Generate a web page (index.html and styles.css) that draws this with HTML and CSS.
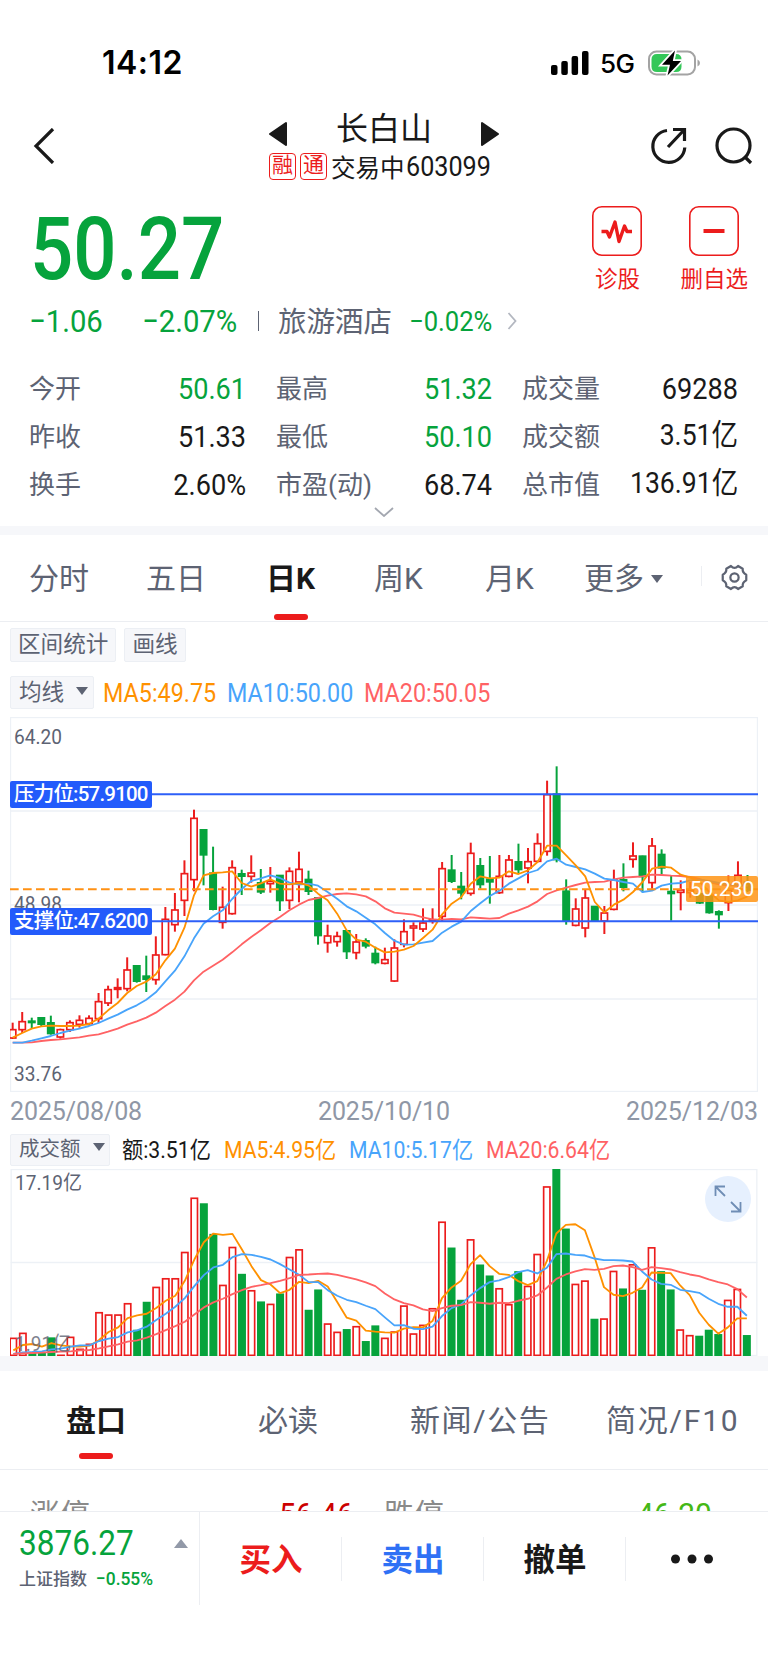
FILE: index.html
```
<!DOCTYPE html>
<html lang="zh-CN">

<head>
    <meta charset="UTF-8">
    <meta name="viewport" content="width=device-width, initial-scale=1.0">
    <title>长白山 603099</title>
    <link rel="stylesheet" href="styles.css">
</head>

<body>
    <div class="statusBar">
        <span class="clock">14:12</span>
        <div class="statusIcons">
            <svg class="signal" viewBox="0 0 38 24">
                <rect x="0" y="14" width="6.5" height="10" rx="2" />
                <rect x="10.3" y="10" width="6.5" height="14" rx="2" />
                <rect x="20.6" y="5" width="6.5" height="19" rx="2" />
                <rect x="31" y="0" width="6.5" height="24" rx="2" />
            </svg>
            <span class="network">5G</span>
            <svg class="battery" viewBox="0 0 52 26">
                <rect x="1" y="1.5" width="46" height="23" rx="7.5" fill="none" stroke="#a3a3a3" stroke-width="2" />
                <path d="M49.500 9.500 Q52 10.500 52 13 Q52 15.500 49.500 16.500 Z" fill="#a3a3a3" />
                <path d="M9 4 H28 Q33.500 4 33.500 9.500 V16.500 Q33.500 22 28 22 H9 Q3.500 22 3.500 16.500 V9.500 Q3.500 4 9 4 Z" fill="#34c759" />
                <path d="M27 .5 L14 14.800 H22 L19.500 25.500 L33 11 H24.800 Z" fill="#000" stroke="#fff" stroke-width="3.600" paint-order="stroke" />
            </svg>
        </div>
    </div>

    <header class="header">
        <svg class="back" viewBox="0 0 22 36"><path d="M20 1 L3 18 L20 35" fill="none" stroke="#191919" stroke-width="3.200" /></svg>
        <div class="stockTitle">
            <div class="stockName">
                <svg class="arrow" viewBox="0 0 18 26"><path d="M17 2 V24 L1 13 Z" stroke-width="2" stroke-linejoin="round" /></svg>
                <h1>长白山</h1>
                <svg class="arrow" viewBox="0 0 18 26"><path d="M1 2 V24 L17 13 Z" stroke-width="2" stroke-linejoin="round" /></svg>
            </div>
            <div class="stockInfo">
                <span class="mark">融</span>
                <span class="mark">通</span>
                <span class="state">交易中</span>
                <span class="code num">603099</span>
            </div>
        </div>
        <div class="headerIcons">
            <svg class="share" viewBox="0 0 38 38" fill="none" stroke="#191919" stroke-width="3.200">
                <path d="M17 3.500 A16 16 0 1 0 34.800 20.500" />
                <path d="M18 20 L34 3 M23 2.500 H34.500 V14" />
            </svg>
            <svg class="search" viewBox="0 0 38 38" fill="none" stroke="#191919" stroke-width="3.200">
                <circle cx="18.500" cy="18.500" r="16.500" />
                <path d="M30 30 L36 36" />
            </svg>
        </div>
    </header>

    <section class="quote">
        <div class="priceRow">
            <span class="price green">50.27</span>
            <div class="actions">
                <div class="action">
                    <svg viewBox="0 0 50 50" fill="none" stroke="#ec1c1c">
                        <rect x=".8" y=".8" width="48.400" height="48.400" rx="9" stroke-width="1.600" />
                        <path d="M9.500 25.500 H15 L17.500 31 L23 16 L27 35.500 L32.500 20 L35 25.500 H40" stroke-width="3.400" stroke-linejoin="round" />
                    </svg>
                    <span>诊股</span>
                </div>
                <div class="action">
                    <svg viewBox="0 0 50 50" fill="none" stroke="#ec1c1c">
                        <rect x=".8" y=".8" width="48.400" height="48.400" rx="9" stroke-width="1.600" />
                        <path d="M14.500 25 H35.500" stroke-width="4" />
                    </svg>
                    <span>删自选</span>
                </div>
            </div>
        </div>
        <div class="changeRow">
            <span class="diff num green">−1.06</span>
            <span class="percent num green">−2.07%</span>
            <i class="bar"></i>
            <span class="sector">旅游酒店</span>
            <span class="sectorPercent num green">−0.02%</span>
            <svg class="more" viewBox="0 0 10 18"><path d="M1.500 1 L8.500 9 L1.500 17" fill="none" stroke="#b3b7c0" stroke-width="1.800" /></svg>
        </div>
        <div class="stats">
            <div class="stat"><span>今开</span><b class="green">50.61</b></div>
            <div class="stat"><span>最高</span><b class="green">51.32</b></div>
            <div class="stat"><span>成交量</span><b>69288</b></div>
            <div class="stat"><span>昨收</span><b>51.33</b></div>
            <div class="stat"><span>最低</span><b class="green">50.10</b></div>
            <div class="stat"><span>成交额</span><b>3.51亿</b></div>
            <div class="stat"><span>换手</span><b>2.60%</b></div>
            <div class="stat"><span>市盈(动)</span><b>68.74</b></div>
            <div class="stat"><span>总市值</span><b>136.91亿</b></div>
        </div>
        <svg class="expand" viewBox="0 0 20 10"><path d="M1 1 L10 9 L19 1" fill="none" stroke="#a3a7b0" stroke-width="1.800" /></svg>
    </section>

    <nav class="periods">
        <span>分时</span>
        <span>五日</span>
        <span class="active">日K</span>
        <span>周K</span>
        <span>月K</span>
        <span>更多<i class="caret"></i></span>
        <i class="divider"></i>
        <svg class="gear" viewBox="0 0 28 28" fill="none" stroke="#5d6373" stroke-width="2.300" stroke-linejoin="round">
            <path d="M10.300 2 Q14 6 17.700 2 L22.500 4.900 Q22 9 26.200 11.200 V16.800 Q22 19 22.500 23.100 L17.700 26 Q14 22 10.300 26 L5.500 23.100 Q6 19 1.800 16.800 V11.200 Q6 9 5.500 4.900 Z" />
            <circle cx="14" cy="14" r="4.300" />
        </svg>
    </nav>

    <div class="tools">
        <span class="chip">区间统计</span>
        <span class="chip">画线</span>
    </div>

    <div class="legend">
        <span class="chip select">均线<i class="caret"></i></span>
        <span class="ma5 num">MA5:49.75</span>
        <span class="ma10 num">MA10:50.00</span>
        <span class="ma20 num">MA20:50.05</span>
    </div>

    <div class="chart klineChart">
        <span class="axis axisTop">64.20</span>
        <span class="axis axisMiddle">48.98</span>
        <span class="axis axisBottom">33.76</span>
        <svg class="kline" viewBox="30 20 2244 1125"></svg>
        <span class="level pressure">压力位:57.9100</span>
        <span class="level support">支撑位:47.6200</span>
        <span class="lastPrice">50.230</span>
    </div>

    <div class="dates">
        <span>2025/08/08</span>
        <span>2025/10/10</span>
        <span>2025/12/03</span>
    </div>

    <div class="legend volumeLegend">
        <span class="chip select">成交额<i class="caret"></i></span>
        <span class="amount num">额:3.51亿</span>
        <span class="ma5 num">MA5:4.95亿</span>
        <span class="ma10 num">MA10:5.17亿</span>
        <span class="ma20 num">MA20:6.64亿</span>
    </div>

    <div class="chart volumeChart">
        <svg class="volume" viewBox="30 238 2244 562"></svg>
        <span class="axis volumeTop">17.19亿</span>
        <span class="axis volumeBottom">1.91亿</span>
        <svg class="fullscreen" viewBox="0 0 46 46">
            <circle cx="23" cy="23" r="23" fill="#e6f0fe" />
            <path d="M10.500 20 V10.500 H20 M10.500 10.500 L20 20 M26 26 L35.500 35.500 M35.500 26 V35.500 H26" fill="none" stroke="#6f8db5" stroke-width="1.800" />
        </svg>
    </div>

    <nav class="infoTabs">
        <span class="active">盘口</span>
        <span>必读</span>
        <span class="news">新闻/公告</span>
        <span class="brief">简况/F10</span>
    </nav>

    <div class="limits">
        <span>涨停</span>
        <b class="up">56.46</b>
        <span>跌停</span>
        <b class="down">46.20</b>
    </div>

    <footer class="tradeBar">
        <div class="index">
            <div class="indexValue num green">3876.27</div>
            <div class="indexName">上证指数 <span class="indexPercent num green">−0.55%</span></div>
            <i class="indexUp"></i>
        </div>
        <div class="trade buy">买入</div>
        <div class="trade sell">卖出</div>
        <div class="trade">撤单</div>
        <div class="trade">
            <svg class="dots" viewBox="0 0 42 10"><circle cx="4.500" cy="5" r="4.500" /><circle cx="21" cy="5" r="4.500" /><circle cx="37.500" cy="5" r="4.500" /></svg>
        </div>
    </footer>

    <script src="charts.js"></script>
</body>

</html>
```
FILE: styles.css
```
body {
    margin: 0;
    width: 768px;
    height: 1670px;
    overflow: hidden;
    background-color: white;
    color: #191919;
    font-family: Roboto, "Noto Sans CJK SC", sans-serif;
}

svg {
    display: block;
    flex: none;
}

.green {
    color: #06a33c;
}

/* numeros estrechos */
.num {
    display: inline-block;
    box-sizing: border-box;
    transform: scaleX(0.915);
    transform-origin: left center;
    white-space: nowrap;
}

/* barra de estado */
.statusBar {
    box-sizing: border-box;
    height: 100px;
    padding: 25px 68px 0 102px;
    display: flex;
    justify-content: space-between;
    align-items: center;
    color: black;
    font-family: Inter, sans-serif;
}

.clock {
    font-size: 32px;
    font-weight: 600;
    letter-spacing: 0.5px;
}

.statusIcons {
    display: flex;
    align-items: center;
}

.signal {
    width: 38px;
    height: 24px;
}

.network {
    width: 36px;
    margin: 1px 12px 0 11px;
    font-size: 26px;
    font-weight: 500;
    letter-spacing: -0.5px;
}

.battery {
    width: 52px;
    height: 26px;
}

/* cabecera */
.header {
    height: 92px;
    padding: 0 15px 0 33px;
    display: flex;
    justify-content: space-between;
    align-items: center;
}

.back {
    width: 22px;
    height: 36px;
    margin: 0 62px 0 0;
}

.stockTitle {
    width: 230px;
    display: flex;
    flex-direction: column;
    align-self: flex-start;
    padding: 14px 0 0 1px;
}

.stockName {
    display: flex;
    justify-content: space-between;
    align-items: center;
    height: 40px;
}

h1 {
    margin: 0 0 11px 0;
    font-size: 32px;
    font-weight: 400;
    line-height: 38px;
}

.arrow {
    width: 18px;
    height: 26px;
    fill: #191919;
    stroke: #191919;
}

.stockInfo {
    display: flex;
    align-items: center;
    height: 25px;
    font-size: 24.5px;
    white-space: nowrap;
}

.mark {
    flex: none;
    box-sizing: border-box;
    width: 27px;
    height: 27px;
    margin-right: 4px;
    border: 1px solid #ec1c1c;
    border-radius: 4px;
    color: #ec1c1c;
    font-size: 21px;
    line-height: 23px;
    text-align: center;
}

.state {
    width: 79px;
    padding-bottom: 1px;
}

.code {
    font-size: 27.5px;
}

.headerIcons {
    display: flex;
    gap: 27px;
}

.share,
.search {
    width: 38px;
    height: 38px;
}

/* cotizacion */
.quote {
    position: relative;
    height: 334px;
    border-bottom: 9px solid #f6f7fa;
}

.priceRow {
    height: 106px;
    padding: 0 20px 0 30px;
    display: flex;
    justify-content: space-between;
}

.price {
    font-size: 87px;
    font-weight: 500;
    line-height: 115px;
    transform: scaleX(0.875);
    transform-origin: left center;
}

.actions {
    display: flex;
    gap: 38px;
    padding-top: 14px;
}

.action {
    display: flex;
    flex-direction: column;
    align-items: center;
    color: #ec1c1c;
    font-size: 22.5px;
    line-height: 46px;
}

.action svg {
    width: 50px;
    height: 50px;
}

.changeRow {
    display: flex;
    align-items: center;
    height: 46px;
    padding-left: 29px;
    font-size: 32px;
}

.diff {
    width: 113px;
}

.percent {
    width: 115px;
}

.bar {
    width: 1px;
    height: 20px;
    margin: 0 19px 0 1px;
    background-color: #5d6373;
}

.sector {
    width: 131px;
    padding-bottom: 3px;
    color: #5d6373;
    font-size: 28.5px;
}

.sectorPercent {
    width: 98px;
    font-size: 28px;
}

.more {
    width: 10px;
    height: 18px;
}

.stats {
    display: grid;
    grid-template-columns: 217px 216px 216px;
    grid-auto-rows: 48px;
    column-gap: 30px;
    padding: 21px 30px 0 29px;
}

.stat {
    display: flex;
    justify-content: space-between;
    align-items: center;
    color: #5d6373;
    font-size: 26px;
}

.stat span {
    padding-bottom: 5px;
}

.stat b {
    font-size: 29.5px;
    font-weight: 400;
    line-height: 36px;
    color: #191919;
    transform: scaleX(0.92);
    transform-origin: right center;
}

.stat:nth-child(6) b,
.stat:nth-child(9) b {
    padding-bottom: 4px;
    transform: scaleX(0.9);
}

.stat b.green {
    color: #06a33c;
}

.expand {
    position: absolute;
    left: 374px;
    top: 315px;
    width: 20px;
    height: 10px;
}

/* periodos */
.periods {
    box-sizing: border-box;
    height: 87px;
    padding: 0 0 4px 29px;
    display: grid;
    grid-template-columns: 117px 120px 108px 111px 99px 117px 20px 28px;
    align-items: center;
    border-bottom: 1px solid #eceef2;
    color: #5d6373;
    font-size: 30px;
}

.active {
    position: relative;
    justify-self: start;
    color: #191919;
    font-weight: 700;
}

.active::after {
    content: "";
    position: absolute;
    left: 50%;
    bottom: -22px;
    width: 34px;
    height: 6px;
    margin-left: -17px;
    border-radius: 3px;
    background-color: #ec1c1c;
}

.caret {
    display: inline-block;
    border-left: 6px solid transparent;
    border-right: 6px solid transparent;
    border-top: 8px solid #5d6373;
    margin-left: 7px;
    vertical-align: 6px;
}

.divider {
    width: 1px;
    height: 20px;
    background-color: #eceef2;
}

.gear {
    width: 27px;
    height: 27px;
    margin-top: 3px;
}

.tools {
    display: flex;
    gap: 8px;
    height: 48px;
    padding: 6px 10px 0 10px;
    box-sizing: border-box;
}

.chip {
    box-sizing: border-box;
    height: 34px;
    padding: 0 7px;
    border: 1px solid #eceff4;
    border-radius: 2px;
    background-color: #f6f7fa;
    color: #5d6373;
    font-size: 22.6px;
    line-height: 32px;
}

.legend {
    display: flex;
    align-items: center;
    height: 47px;
    padding-left: 10px;
    font-size: 25.5px;
}

.legend .num {
    padding-bottom: 2px;
}

.select {
    width: 84px;
    height: 33px;
    padding: 0 0 0 8px;
    margin: 0 9px 2px 0;
    line-height: 31px;
}

.select .caret {
    margin-left: 12px;
    vertical-align: 5px;
}

.ma5 {
    width: 124px;
    color: #ff9100;
}

.ma10 {
    width: 137px;
    color: #48a4fb;
}

.ma20 {
    color: #ff6264;
}

/* graficos */
.chart {
    position: relative;
    width: 748px;
    margin-left: 10px;
}

.klineChart {
    height: 375px;
}

.kline {
    width: 748px;
    height: 375px;
}

.axis {
    position: absolute;
    left: 4px;
    color: #5d6373;
    font-size: 20.5px;
    line-height: 24px;
    transform: scaleX(0.93);
    transform-origin: left center;
}

.axisTop {
    top: 8px;
}

.axisMiddle {
    top: 175px;
}

.axisBottom {
    bottom: 6px;
}

.level {
    position: absolute;
    left: 0;
    box-sizing: border-box;
    width: 142px;
    height: 27px;
    padding-left: 4px;
    border-radius: 2px;
    background-color: #235bfb;
    color: white;
    font-size: 20.5px;
    font-weight: 500;
    letter-spacing: -0.8px;
    line-height: 26px;
    white-space: nowrap;
}

.pressure {
    top: 64px;
}

.support {
    top: 191px;
}

.lastPrice {
    position: absolute;
    right: 0;
    top: 159px;
    width: 72px;
    height: 26px;
    border-radius: 2px;
    background-color: rgba(255, 148, 20, 0.85);
    color: white;
    font-size: 21px;
    line-height: 27px;
    text-align: center;
}

.dates {
    display: flex;
    justify-content: space-between;
    align-items: center;
    height: 39px;
    padding: 0 10px;
    color: #8f97a6;
    font-size: 25px;
    letter-spacing: -0.1px;
}

.volumeLegend {
    height: 38px;
    font-size: 23.2px;
}

.volumeLegend .num {
    padding-bottom: 5px;
}

.volumeLegend .chip {
    width: 100px;
    height: 32px;
    font-size: 20.5px;
    line-height: 28px;
    margin: 0 12px 0 0;
}

.amount {
    width: 102px;
}

.volumeLegend .ma5 {
    width: 125px;
}

.volumeChart {
    height: 187px;
}

.volume {
    width: 748px;
    height: 187px;
}

.volumeTop {
    left: 5px;
    top: 2px;
}

.volumeBottom {
    left: 5px;
    bottom: 0;
    opacity: 0.8;
}

.fullscreen {
    position: absolute;
    left: 695px;
    top: 7px;
    width: 46px;
    height: 46px;
}

/* pestañas inferiores */
.infoTabs {
    box-sizing: border-box;
    height: 114px;
    padding: 0 0 4px 66px;
    display: grid;
    grid-template-columns: 192px 152px 196px 1fr;
    align-items: center;
    border-top: 15px solid #f6f7fa;
    border-bottom: 1px solid #eceef2;
    color: #5d6373;
    font-size: 30px;
}

.infoTabs .active::after {
    bottom: -19px;
}

.news {
    letter-spacing: 1.6px;
}

.brief {
    letter-spacing: 1.8px;
}

.limits {
    display: grid;
    grid-template-columns: 249px 105px 253px 1fr;
    height: 41px;
    padding: 0 20px 0 30px;
    overflow: hidden;
    color: #8a8a8a;
    font-size: 30px;
    line-height: 89px;
}

.limits b {
    font-weight: 400;
    font-size: 32px;
    transform: scaleX(0.93);
    transform-origin: left center;
}

.limits .up {
    color: #cc0000;
}

.limits .down {
    color: #45b817;
}

/* barra de operaciones */
.tradeBar {
    display: grid;
    grid-template-columns: 200px 142px 142px 142px 142px;
    height: 93px;
    border-top: 1px solid #eceef2;
}

.index {
    position: relative;
    border-right: 1px solid #eceef2;
    padding: 12px 0 0 19px;
}

.indexValue {
    font-size: 34.5px;
    line-height: 38px;
}

.indexName {
    margin-top: 5px;
    color: #5d6373;
    font-size: 17px;
    font-weight: 500;
    line-height: 24px;
}

.indexPercent {
    margin-left: 5px;
    font-size: 19px;
}

.indexUp {
    position: absolute;
    right: 11px;
    top: 27px;
    border-left: 7px solid transparent;
    border-right: 7px solid transparent;
    border-bottom: 9px solid #9299a8;
}

.trade {
    box-sizing: border-box;
    display: flex;
    justify-content: center;
    align-items: center;
    height: 44px;
    margin-top: 25px;
    padding: 0 0 4px 1px;
    border-right: 1px solid #eceef2;
    font-size: 31.5px;
    font-weight: 700;
}

.trade:last-child {
    padding: 0 10px 0 0;
    border-right: none;
}

.buy {
    color: #ec1c1c;
}

.sell {
    color: #2f71f5;
}

.dots {
    width: 42px;
    height: 10px;
    fill: #191919;
}
```
FILE: charts.js
```
const RED = '#ec1c1c';
const GREEN = '#06a33c';
const STEP = 28.63;
const FIRST = 38;

// color, maximo, techo del cuerpo, base del cuerpo, minimo
const candles = [
    ['r', 937, 958, 983, 986], ['r', 905, 934, 958, 968], ['g', 922, 932, 937, 953], ['g', 920, 922, 942, 948],
    ['g', 916, 937, 970, 973], ['r', 955, 958, 980, 985], ['r', 930, 937, 958, 965], ['r', 915, 930, 942, 952],
    ['r', 915, 924, 940, 945], ['r', 848, 874, 925, 938], ['r', 826, 838, 878, 887], ['r', 804, 832, 837, 864],
    ['r', 741, 779, 835, 843], ['g', 764, 766, 813, 817], ['g', 736, 797, 807, 845], ['r', 678, 734, 808, 823],
    ['r', 590, 627, 733, 735], ['r', 548, 599, 643, 664], ['r', 450, 490, 570, 617], ['r', 298, 324, 508, 543],
    ['g', 357, 358, 434, 525], ['g', 409, 488, 597, 600], ['r', 529, 591, 636, 655], ['r', 450, 472, 610, 613],
    ['g', 478, 490, 498, 554], ['r', 435, 488, 498, 517], ['g', 476, 517, 545, 551], ['r', 470, 513, 520, 547],
    ['g', 494, 495, 571, 602], ['r', 471, 483, 570, 596], ['r', 424, 477, 515, 576], ['g', 481, 507, 543, 554],
    ['g', 560, 562, 676, 703], ['r', 643, 677, 697, 727], ['r', 664, 678, 694, 709], ['g', 660, 661, 724, 746],
    ['r', 671, 695, 727, 747], ['g', 684, 691, 707, 714], ['g', 709, 729, 757, 762], ['r', 712, 748, 759, 762],
    ['r', 687, 713, 812, 815], ['r', 627, 664, 702, 711], ['r', 636, 647, 653, 692], ['r', 594, 638, 656, 665],
    ['r', 594, 628, 633, 640], ['r', 455, 475, 618, 632], ['g', 434, 479, 513, 518], ['g', 485, 528, 548, 567],
    ['r', 397, 429, 549, 556], ['g', 443, 466, 523, 535], ['g', 437, 506, 515, 580], ['r', 434, 498, 547, 551],
    ['r', 434, 449, 498, 501], ['g', 400, 454, 478, 489], ['r', 413, 454, 473, 519], ['r', 369, 400, 453, 456],
    ['r', 211, 253, 423, 436], ['g', 168, 251, 448, 456], ['g', 507, 542, 631, 643], ['r', 564, 596, 645, 648],
    ['r', 537, 563, 653, 681], ['g', 587, 588, 632, 634], ['r', 587, 608, 632, 671], ['r', 478, 509, 597, 600],
    ['g', 459, 508, 531, 543], ['r', 396, 437, 447, 472], ['g', 436, 437, 499, 546], ['r', 383, 407, 517, 535],
    ['g', 417, 432, 473, 492], ['g', 495, 543, 550, 631], ['r', 510, 539, 546, 600], ['r', 515, 540, 547, 562],
    ['g', 545, 550, 578, 581], ['g', 550, 555, 607, 610], ['g', 600, 604, 613, 655], ['r', 495, 540, 577, 602],
    ['r', 453, 495, 525, 540], ['g', 494, 515, 540, 545]
];

const priceMa = {
    '#ff6264': [997, 997, 996, 992, 989, 987, 984, 981, 976, 972, 964, 955, 943, 933, 922, 907, 887, 868, 844, 810, 784, 766, 748, 726, 702, 680, 660, 638, 620, 600, 583, 569, 563, 556, 551, 549, 552, 558, 573, 594, 607, 610, 613, 621, 627, 628, 626, 627, 621, 623, 625, 623, 610, 600, 589, 573, 551, 540, 532, 524, 517, 515, 514, 507, 502, 500, 498, 493, 494, 496, 497, 500, 506, 515, 522, 525, 526, 526],
    '#48a4fb': [997, 997, 991, 984, 977, 968, 961, 955, 947, 938, 925, 913, 898, 885, 868, 846, 813, 781, 738, 684, 640, 618, 600, 566, 536, 512, 504, 495, 503, 517, 523, 520, 526, 545, 565, 588, 603, 622, 642, 668, 691, 703, 702, 697, 692, 667, 649, 634, 602, 579, 557, 541, 520, 504, 488, 479, 453, 445, 463, 470, 477, 490, 505, 509, 515, 520, 545, 541, 526, 520, 518, 510, 508, 512, 518, 522, 524, 526],
    '#ff9100': [982, 968, 955, 948, 946, 947, 947, 946, 941, 925, 900, 878, 848, 827, 814, 792, 750, 715, 652, 555, 495, 488, 486, 483, 518, 529, 519, 507, 520, 522, 518, 525, 550, 570, 610, 660, 688, 694, 712, 726, 724, 718, 707, 683, 658, 612, 580, 561, 520, 498, 504, 502, 483, 491, 480, 455, 406, 406, 435, 465, 498, 575, 606, 583, 568, 545, 515, 475, 469, 472, 493, 502, 515, 545, 570, 575, 570, 558]
};

const volumes = [746, 731, 790, 790, 745, 797, 743, 779, 764, 669, 676, 676, 642, 722, 638, 593, 567, 567, 488, 325, 342, 434, 587, 473, 554, 603, 637, 644, 613, 503, 480, 662, 601, 703, 728, 720, 711, 756, 709, 746, 727, 649, 733, 707, 657, 397, 475, 632, 450, 526, 559, 597, 645, 546, 590, 494, 291, 235, 418, 584, 574, 689, 688, 545, 598, 525, 602, 474, 546, 601, 721, 738, 740, 722, 735, 632, 599, 738];

const volumeMa = {
    '#ff9100': [783, 767, 764, 772, 761, 768, 771, 772, 769, 752, 728, 714, 686, 678, 673, 656, 634, 619, 574, 510, 458, 432, 436, 433, 480, 530, 572, 585, 611, 601, 577, 581, 574, 591, 638, 685, 694, 724, 727, 729, 730, 718, 713, 714, 695, 626, 594, 574, 524, 497, 530, 553, 556, 575, 587, 575, 515, 432, 406, 404, 422, 502, 593, 616, 620, 610, 594, 549, 550, 551, 588, 617, 670, 706, 733, 714, 687, 687],
    '#48a4fb': [794, 789, 788, 786, 780, 778, 772, 768, 768, 755, 748, 743, 729, 723, 712, 692, 673, 652, 626, 590, 557, 534, 526, 503, 494, 496, 502, 510, 524, 540, 556, 578, 578, 602, 619, 631, 638, 649, 659, 684, 708, 707, 718, 719, 712, 680, 656, 645, 618, 596, 578, 573, 563, 548, 542, 552, 535, 494, 492, 496, 498, 507, 512, 512, 513, 516, 546, 570, 583, 586, 601, 605, 610, 628, 643, 652, 652, 679],
    '#ff6264': [794, 792, 791, 790, 788, 787, 786, 783, 782, 777, 771, 765, 757, 753, 745, 734, 722, 710, 697, 675, 654, 639, 628, 614, 602, 592, 587, 581, 574, 566, 556, 555, 553, 552, 556, 563, 570, 579, 590, 612, 630, 641, 648, 660, 665, 656, 649, 647, 638, 640, 643, 640, 641, 634, 628, 618, 595, 568, 555, 546, 539, 541, 538, 530, 528, 533, 541, 533, 536, 540, 548, 555, 560, 570, 578, 585, 599, 624]
};

function line(x1, y1, x2, y2, color, width, dash) {
    return `<line x1="${x1}" y1="${y1}" x2="${x2}" y2="${y2}" stroke="${color}" stroke-width="${width}" stroke-dasharray="${dash || 'none'}"/>`;
}

function averages(series) {
    let out = '';
    for (let color in series) {
        let points = series[color].map((y, i) => `${FIRST + i * STEP},${y}`).join(' ');
        out += `<polyline points="${points}" fill="none" stroke="${color}" stroke-width="5.5" stroke-linejoin="round"/>`;
    }
    return out;
}

function body(x, top, bottom, up) {
    if (up) {
        return `<rect x="${x - 9.5}" y="${top}" width="19" height="${Math.max(bottom - top, 2)}" fill="white" stroke="${RED}" stroke-width="5"/>`;
    }
    return `<rect x="${x - 12}" y="${top - 2}" width="24" height="${bottom - top + 4}" fill="${GREEN}"/>`;
}

let kline = '';
for (let y of [302, 584, 866]) {
    kline += line(30, y, 2274, y, '#edf1f6', 5);
}
kline += '<rect x="31.500" y="21.500" width="2241" height="1122" fill="none" stroke="#edf1f6" stroke-width="4"/>';
candles.forEach(([color, high, top, bottom, low], i) => {
    let x = FIRST + i * STEP;
    kline += line(x, high, x, low, color == 'r' ? RED : GREEN, 6);
    kline += body(x, top, bottom, color == 'r');
});
kline += averages(priceMa);
kline += line(30, 537, 2274, 537, '#ff9114', 6, '26 13');
kline += line(30, 252, 2274, 252, '#2d5ff8', 6);
kline += line(30, 633, 2274, 633, '#2d5ff8', 6);
document.querySelector('.kline').innerHTML = kline;

let volume = line(30, 519, 2274, 519, '#edf1f6', 5);
volume += '<rect x="31.500" y="239.500" width="2241" height="559" fill="none" stroke="#edf1f6" stroke-width="4"/>';
volumes.forEach((top, i) => {
    volume += body(FIRST + i * STEP, top + 1, 798, candles[i][0] == 'r');
});
volume += averages(volumeMa);
document.querySelector('.volume').innerHTML = volume;
```
